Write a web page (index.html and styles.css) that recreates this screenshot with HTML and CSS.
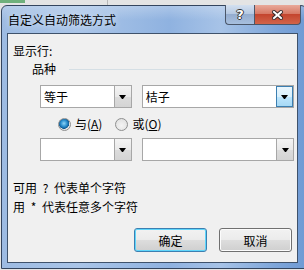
FILE: index.html
```html
<!DOCTYPE html>
<html lang="zh-CN">
<head>
    <meta charset="UTF-8">
    <title>自定义自动筛选方式</title>
    <link rel="stylesheet" href="styles.css">
</head>
<body>

<div class="window">
    <!-- Title bar -->
    <div class="titlebar">
        <span class="title">自定义自动筛选方式</span>
        <div class="caption-btns">
            <div class="cap-btn help">?</div>
            <div class="cap-btn close">
                <svg width="11" height="10" viewBox="0 0 11 10">
                    <path d="M2 2 L9 8 M9 2 L2 8" stroke="#3a2a2a" stroke-width="4" stroke-linecap="square"/>
                    <path d="M2 2 L9 8 M9 2 L2 8" stroke="#ffffff" stroke-width="2" stroke-linecap="square"/>
                </svg>
            </div>
        </div>
    </div>

    <!-- Dialog body -->
    <div class="client">
        <div class="label">显示行:</div>

        <div class="group">
            <span>品种</span>
            <span class="group-line"></span>
        </div>

        <div class="combo-row">
            <div class="combo small">
                <span class="combo-text">等于</span>
                <span class="drop-btn"><i class="arrow"></i></span>
            </div>
            <div class="combo wide">
                <span class="combo-text">桔子</span>
                <span class="drop-btn hot"><i class="arrow"></i></span>
            </div>
        </div>

        <div class="radios">
            <label class="radio"><span class="dot checked"></span>与(<u>A</u>)</label>
            <label class="radio"><span class="dot"></span>或(<u>O</u>)</label>
        </div>

        <div class="combo-row second">
            <div class="combo small">
                <span class="combo-text"></span>
                <span class="drop-btn"><i class="arrow"></i></span>
            </div>
            <div class="combo wide">
                <span class="combo-text"></span>
                <span class="drop-btn"><i class="arrow"></i></span>
            </div>
        </div>

        <div class="hint first">可用 ? 代表单个字符</div>
        <div class="hint">用 * 代表任意多个字符</div>

        <div class="actions">
            <button class="push-btn default">确定</button>
            <button class="push-btn">取消</button>
        </div>
    </div>
</div>

</body>
</html>
```

FILE: styles.css
```css
/* Page / sheet behind the dialog */
body {
    margin: 0;
    width: 304px;
    height: 270px;
    overflow: hidden;
    font-family: "Noto Sans CJK SC", "Microsoft YaHei", sans-serif;
    font-size: 12px;
    color: #000;
    background:
        linear-gradient(to right, #6fb07c 0 25px, transparent 25px) top left / 100% 3px no-repeat,
        linear-gradient(to right, transparent 107px, #b8b8b8 107px 108px, transparent 108px) top left / 100% 5px no-repeat,
        #e4e4e4;
}

/* Window frame */
.window {
    box-sizing: border-box;
    width: 306px;
    height: 264px;
    margin: 5px 0 0 1px;
    padding: 0 7px 5px 5px;
    border: 1px solid #34455e;
    border-radius: 6px 6px 0 0;
    display: flex;
    flex-direction: column;
    background:
        linear-gradient(to bottom, rgba(255, 255, 255, 0.25), rgba(255, 255, 255, 0) 14px),
        linear-gradient(to right, #9dbbe2 0%, #aac5e8 25%, #8fb2e0 55%, #a7c3e7 72%, #7ea6da 90%, #6f9ad4 100%);
}

/* Title bar */
.titlebar {
    height: 27px;
    display: flex;
    justify-content: space-between;
    align-items: flex-start;
}

.title {
    padding: 6px 0 0 1px;
    line-height: 16px;
    font-size: 12px;
    color: #000;
    text-shadow: 0 0 6px rgba(255, 255, 255, 0.9);
}

.caption-btns {
    display: flex;
    margin: -1px -2px 0 0;
}

.cap-btn {
    box-sizing: border-box;
    height: 20px;
    display: flex;
    justify-content: center;
    align-items: center;
    border: 1px solid #4a5669;
    border-top: none;
}

.help {
    width: 29px;
    border-radius: 0 0 0 4px;
    border-right: none;
    background: linear-gradient(to bottom, #d3e0f0 0%, #b6c9e2 45%, #95adcf 50%, #a7bfde 100%);
    color: #fff;
    font-family: "DejaVu Sans", sans-serif;
    font-weight: bold;
    font-size: 13px;
    text-shadow: 1px 0 0 #333, -1px 0 0 #333, 0 1px 0 #333, 0 -1px 0 #333;
}

.close {
    width: 47px;
    border-radius: 0 0 4px 0;
    background: linear-gradient(to bottom, #e9a999 0%, #d77a66 45%, #c4452e 50%, #d2644a 100%);
}

/* Client area */
.client {
    flex: 1;
    box-sizing: border-box;
    width: 291px;
    padding: 9px 3px 0 5px;
    background: #f0f0f0;
    border: 1px solid #3f526b;
}

.label,
.hint {
    line-height: 16px;
}

/* Group header with line */
.group {
    display: flex;
    align-items: center;
    margin-top: 2px;
    padding-left: 19px;
    line-height: 16px;
}

.group-line {
    flex: 1;
    height: 1px;
    margin-left: 13px;
    background: #d5dfe5;
}

/* Combo boxes */
.combo-row {
    display: flex;
    gap: 10px;
    margin-top: 8px;
    padding-left: 27px;
}

.combo-row.second {
    margin-top: 6px;
}

.combo {
    box-sizing: border-box;
    height: 23px;
    display: flex;
    background: #fff;
    border: 1px solid #a7a7a7;
}

.combo.small {
    width: 92px;
}

.combo.wide {
    width: 153px;
}

.combo-text {
    flex: 1;
    padding-left: 3px;
    line-height: 21px;
}

.drop-btn {
    box-sizing: border-box;
    width: 17px;
    display: flex;
    justify-content: center;
    align-items: center;
    border-left: 1px solid #a7a7a7;
    background: linear-gradient(to bottom, #f4f4f4 0%, #e9e9e9 50%, #dcdcdc 51%, #d4d4d4 100%);
}

.drop-btn.hot {
    border: 1px solid #3c7fb1;
    background: linear-gradient(to bottom, #eaf6fd 0%, #d9f0fc 50%, #bee6fd 51%, #a7d9f5 100%);
}

.arrow {
    display: block;
    width: 1px;
    height: 0;
    margin-top: 1px;
    border-top: 4px solid #000;
    border-left: 3px solid transparent;
    border-right: 3px solid transparent;
}

/* Radio buttons */
.radios {
    display: flex;
    gap: 13px;
    margin-top: 8px;
    padding-left: 45px;
    line-height: 16px;
}

.radio {
    display: flex;
    align-items: center;
}

.dot {
    box-sizing: border-box;
    width: 13px;
    height: 13px;
    margin-right: 4px;
    border: 1px solid #8e8f8f;
    border-radius: 50%;
    background: radial-gradient(circle at 50% 60%, #f4f4f4 0%, #dcdcdc 100%);
}

.dot.checked {
    background:
        radial-gradient(circle at 45% 40%, #8fd5f7 0%, #2b8fcf 35%, #0f5a93 58%, transparent 62%),
        radial-gradient(circle, #f4f4f4 0%, #dcdcdc 100%);
}

/* Hints */
.hint {
    word-spacing: 3px;
}

.hint.first {
    margin-top: 19px;
}

.hint + .hint {
    margin-top: 3px;
}

/* Push buttons */
.actions {
    display: flex;
    justify-content: flex-end;
    gap: 12px;
    margin-top: 13px;
    padding-right: 2px;
}

.push-btn {
    box-sizing: border-box;
    width: 73px;
    height: 24px;
    padding: 0;
    font-family: inherit;
    font-size: 12px;
    color: #000;
    border: 1px solid #707070;
    border-radius: 3px;
    background: linear-gradient(to bottom, #f2f2f2 0%, #ebebeb 50%, #dddddd 51%, #cfcfcf 100%);
    box-shadow: inset 0 0 0 1px #fcfcfc;
}

.push-btn.default {
    border-color: #3c7fb1;
    box-shadow: inset 0 0 0 1px #5fd6fb;
}
```
